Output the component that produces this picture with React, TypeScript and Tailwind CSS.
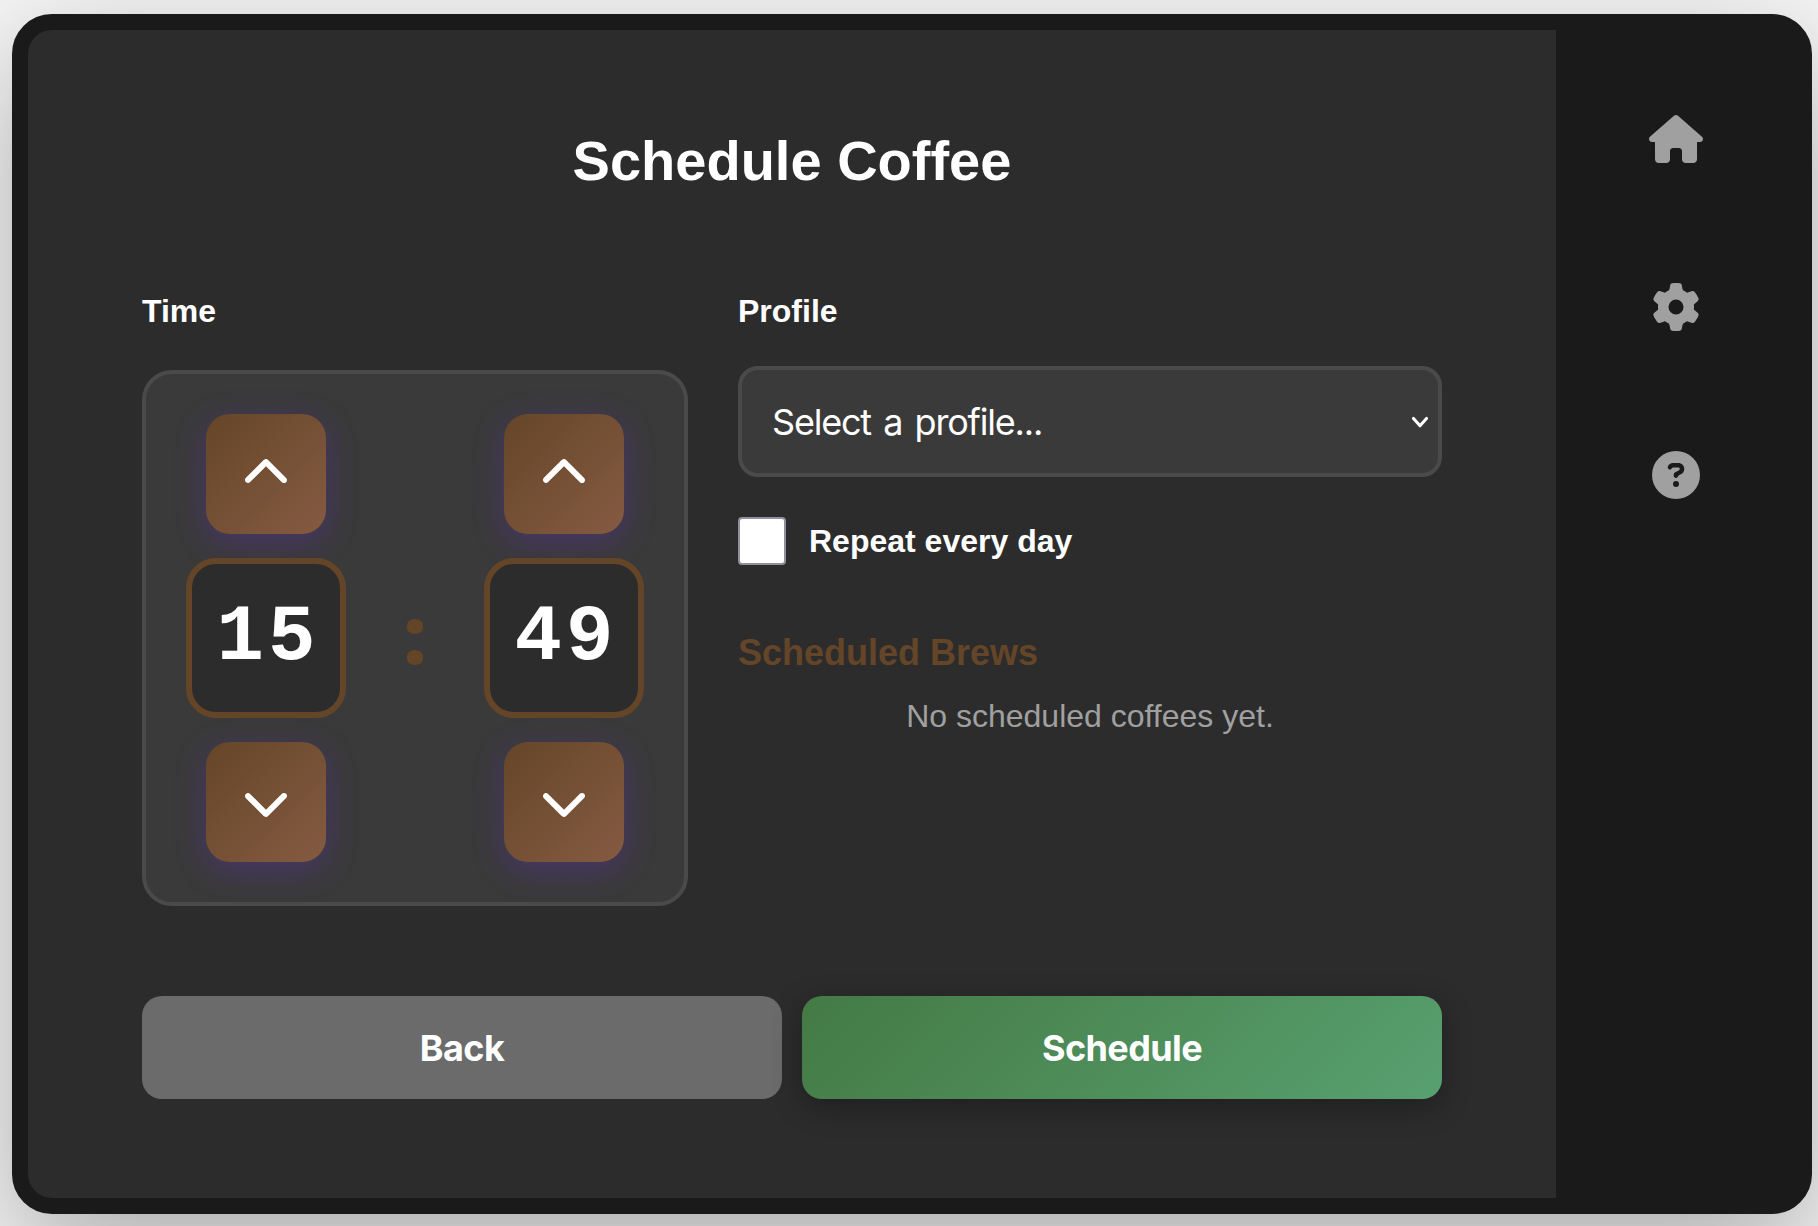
import { useState } from "react";
import { FaHouse, FaGear, FaCircleQuestion, FaChevronUp, FaChevronDown } from "react-icons/fa6";

const pad = (n: number) => String(n).padStart(2, "0");

const stepButton =
  "flex size-[120px] shrink-0 items-center justify-center rounded-3xl bg-[linear-gradient(135deg,#654528,#855b42)] text-white shadow-[0_8px_30px_rgba(90,50,165,0.45)]";

function TimeColumn({ value, max, onChange }: { value: number; max: number; onChange: (n: number) => void }) {
  return (
    <div className="flex flex-col items-center gap-6">
      <button className={stepButton} onClick={() => onChange((value + 1) % max)} aria-label="Increase">
        <FaChevronUp className="size-12" />
      </button>
      <div className="flex size-40 justify-center rounded-[30px] border-[6px] border-[#654528] bg-[#2c2c2c] pt-[26px] pl-1 font-['Liberation_Mono',monospace] text-[79px] leading-[96px] font-bold tracking-[4px] text-white">
        {pad(value)}
      </div>
      <button className={stepButton} onClick={() => onChange((value + max - 1) % max)} aria-label="Decrease">
        <FaChevronDown className="size-12" />
      </button>
    </div>
  );
}

export default function App() {
  const [hour, setHour] = useState(15);
  const [minute, setMinute] = useState(49);

  return (
    <div className="h-[1226px] w-[1818px] overflow-hidden bg-[#f5f5f5] pt-[14px] pl-3 font-['Liberation_Sans',Arial,sans-serif] text-white">
      <div className="h-[1200px] w-[1800px] rounded-[40px] border-[16px] border-[#1a1a1a] bg-[#1a1a1a] shadow-[0_40px_120px_rgba(0,0,0,0.3)]">
        <div className="flex h-full overflow-hidden rounded-3xl">
          <main className="flex w-[1528px] flex-col bg-[#2c2c2c] px-[114px] pt-[99px]">
            <h1 className="text-center text-[56px] leading-[64px] font-bold">Schedule Coffee</h1>

            <div className="mt-[100px] flex gap-[50px]">
              <section className="w-[546px]">
                <h2 className="text-[32px] leading-9 font-bold">Time</h2>
                <div className="mt-[41px] flex items-center justify-between rounded-[30px] border-4 border-[#4a4a4a] bg-[#3a3a3a] p-10">
                  <TimeColumn value={hour} max={24} onChange={setHour} />
                  <span className="pb-[10px] font-['Open_Sans',sans-serif] text-[80px] leading-[96px] font-extrabold text-[#654528]">:</span>
                  <TimeColumn value={minute} max={60} onChange={setMinute} />
                </div>
              </section>

              <section className="flex flex-1 flex-col">
                <h2 className="text-[32px] leading-9 font-bold">Profile</h2>
                <button className="mt-[37px] flex h-[111px] items-center justify-between rounded-[20px] border-4 border-[#4a4a4a] bg-[#3a3a3a] pr-[10px] pl-[30px] font-['Inter',sans-serif] text-[36px] tracking-[-1.2px] [word-spacing:3.4px]">
                  <span>Select a profile...</span>
                  <svg width="16" height="12" viewBox="0 0 16 12" fill="none" stroke="currentColor" strokeWidth="3" strokeLinecap="round" strokeLinejoin="round">
                    <path d="M1.5 2.4 8 9.8 14.5 2.4" />
                  </svg>
                </button>

                <label className="mt-10 flex items-center gap-[23px] text-[32px] leading-9 font-bold">
                  <input type="checkbox" className="size-12 appearance-none rounded border-2 border-[#8f8f9d] bg-white" />
                  Repeat every day
                </label>

                <h3 className="mt-[68px] text-[36px] leading-10 font-bold text-[#654528]">Scheduled Brews</h3>
                <p className="mt-[25px] text-center text-[32px] leading-9 text-[#a0a0a0]">No scheduled coffees yet.</p>
              </section>
            </div>

            <div className="mt-[90px] flex gap-5 font-['Inter',sans-serif] text-[36px] font-bold tracking-[-0.6px]">
              <button className="h-[103px] flex-1 rounded-[20px] bg-[#6b6b6b]">Back</button>
              <button className="h-[103px] flex-1 rounded-[20px] bg-[linear-gradient(135deg,#447a44,#58a070)] shadow-[0_8px_30px_rgba(0,0,0,0.3)]">
                Schedule
              </button>
            </div>
          </main>

          <nav className="flex flex-1 flex-col items-center gap-[120px] bg-[#1a1a1a] pt-[85px] text-[48px] text-[#a0a0a0]">
            <FaHouse className="h-12 w-[54px]" />
            <FaGear />
            <FaCircleQuestion />
          </nav>
        </div>
      </div>
    </div>
  );
}
